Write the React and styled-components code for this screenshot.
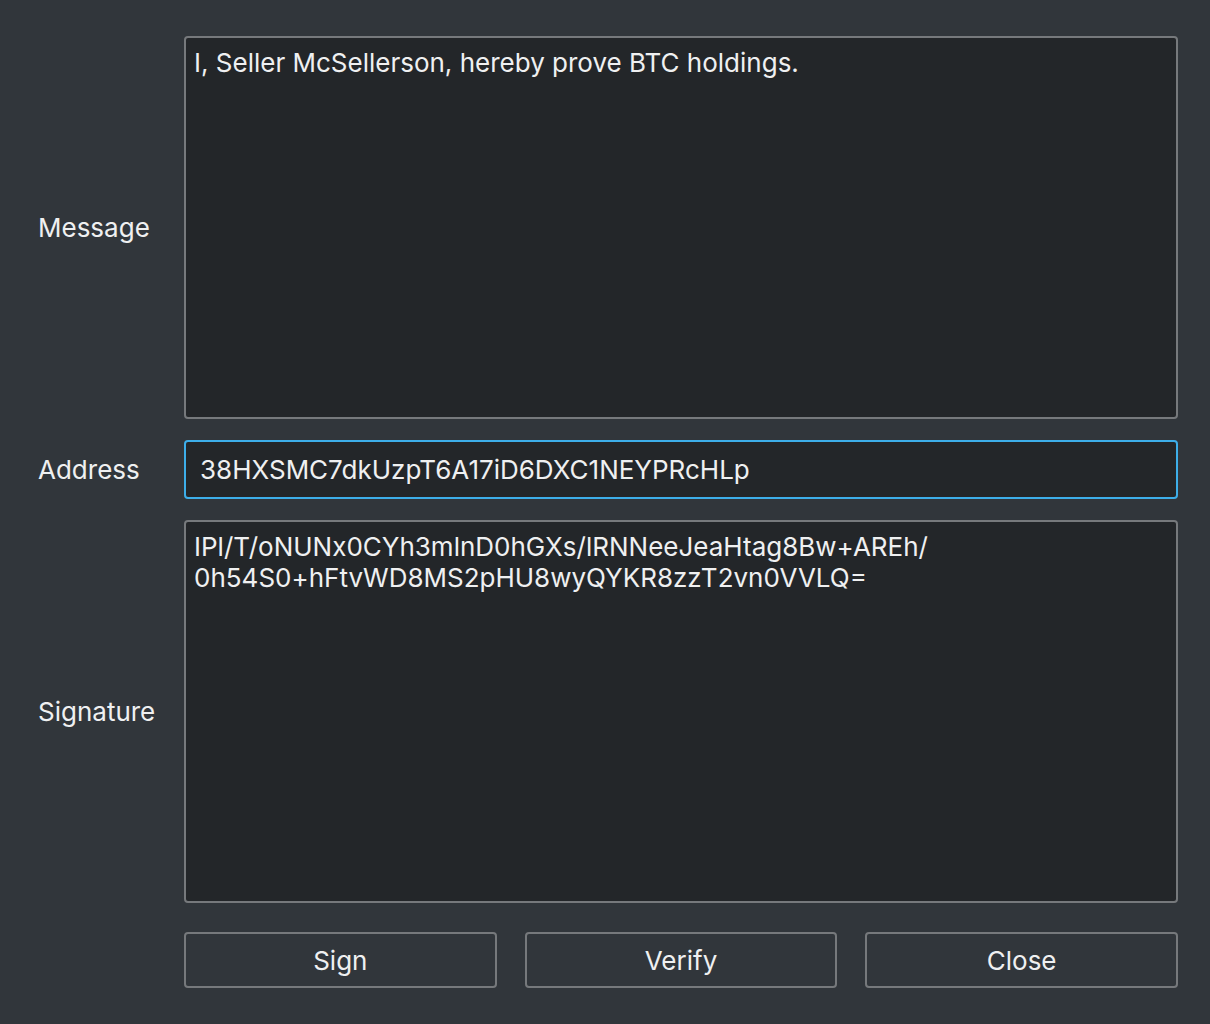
import React from "react";
import styled, { createGlobalStyle } from "styled-components";

const Global = createGlobalStyle`
  html, body {
    margin: 0;
    padding: 0;
    background: #31363b;
  }
  body {
    font-family: Inter, "Noto Sans", sans-serif;
    color: #eff0f1;
  }
`;

const Dialog = styled.div`
  width: 1210px;
  height: 1024px;
  box-sizing: border-box;
  padding: 36px 32px 0 38px;
  display: grid;
  grid-template-columns: 146px 994px;
  grid-template-rows: 383px 59px 383px auto;
  row-gap: 21px;
  align-items: center;
  align-content: start;
`;

const Label = styled.label`
  font-size: 26px;
  color: #eff0f1;
`;

const Area = styled.textarea`
  box-sizing: border-box;
  width: 100%;
  height: 100%;
  resize: none;
  margin: 0;
  background: #232629;
  border: 2px solid #76797c;
  border-radius: 4px;
  padding: 9px 8px;
  color: #eff0f1;
  font-family: inherit;
  font-size: 26px;
  line-height: 31px;
  outline: none;
`;

const Field = styled.input`
  box-sizing: border-box;
  width: 100%;
  height: 100%;
  margin: 0;
  background: #232629;
  border: 2px solid ${(p) => (p.$focused ? "#3daee9" : "#76797c")};
  border-radius: 4px;
  padding: 0 14px;
  color: #eff0f1;
  font-family: inherit;
  font-size: 26px;
  outline: none;
`;

const Buttons = styled.div`
  grid-column: 2;
  margin-top: 8px;
  display: grid;
  grid-template-columns: 1fr 1fr 1fr;
  column-gap: 28px;
`;

const Button = styled.button`
  height: 56px;
  background: #31363b;
  border: 2px solid #76797c;
  border-radius: 4px;
  color: #eff0f1;
  font-family: inherit;
  font-size: 26px;
`;

export default function App() {
  return (
    <>
      <Global />
      <Dialog>
        <Label>Message</Label>
        <Area readOnly value="I, Seller McSellerson, hereby prove BTC holdings." />
        <Label>Address</Label>
        <Field $focused readOnly value="38HXSMC7dkUzpT6A17iD6DXC1NEYPRcHLp" />
        <Label>Signature</Label>
        <Area
          readOnly
          value={"IPl/T/oNUNx0CYh3mlnD0hGXs/lRNNeeJeaHtag8Bw+AREh/\n0h54S0+hFtvWD8MS2pHU8wyQYKR8zzT2vn0VVLQ="}
        />
        <Buttons>
          <Button>Sign</Button>
          <Button>Verify</Button>
          <Button>Close</Button>
        </Buttons>
      </Dialog>
    </>
  );
}
